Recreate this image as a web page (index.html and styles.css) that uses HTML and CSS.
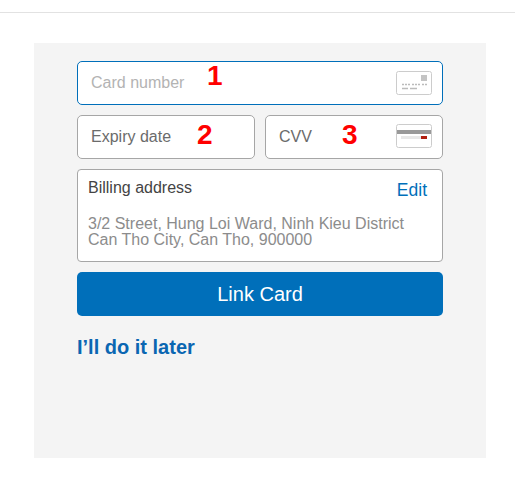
FILE: index.html
```html
<!DOCTYPE html>
<html lang="en">
<head>
    <meta charset="UTF-8">
    <meta name="viewport" content="width=device-width, initial-scale=1.0">
    <title>Link Card</title>
    <link rel="stylesheet" href="styles.css">
</head>
<body>
    <div class="top-line"></div>

    <div class="panel">
        <div class="field field-active">
            <span class="placeholder">Card number</span>
            <span class="mark mark-1">1</span>
            <svg class="card-icon" width="36" height="24" viewBox="0 0 36 24">
                <rect x="0.5" y="0.5" width="35" height="23" rx="2" fill="#fff" stroke="#ccc"/>
                <rect x="25" y="4" width="6" height="6" fill="#c4c4c4"/>
                <path d="M6 13.5h25" stroke="#bbb" stroke-width="1.5" stroke-dasharray="2 1 2 1 2 2"/>
                <path d="M6 17.5h6M14 17.5h7" stroke="#bbb" stroke-width="1.5"/>
            </svg>
        </div>

        <div class="row">
            <div class="field field-half">
                <span class="value">Expiry date</span>
                <span class="mark mark-2">2</span>
            </div>
            <div class="field field-half">
                <span class="value">CVV</span>
                <span class="mark mark-3">3</span>
                <svg class="card-icon card-icon-cvv" width="36" height="24" viewBox="0 0 36 24">
                    <rect x="0.5" y="0.5" width="35" height="23" rx="2" fill="#fff" stroke="#ccc"/>
                    <rect x="1" y="6" width="34" height="4" fill="#999"/>
                    <rect x="5" y="12" width="20" height="3" fill="#e8e8e8"/>
                    <rect x="25" y="12" width="6" height="3" fill="#b01e10"/>
                </svg>
            </div>
        </div>

        <div class="billing">
            <div class="billing-head">
                <span class="billing-title">Billing address</span>
                <a class="edit" href="#">Edit</a>
            </div>
            <div class="address">
                3/2 Street, Hung Loi Ward, Ninh Kieu District<br>
                Can Tho City, Can Tho, 900000
            </div>
        </div>

        <button class="link-card">Link Card</button>

        <a class="later" href="#">I’ll do it later</a>
    </div>
</body>
</html>
```

FILE: styles.css
```css
body {
    margin: 0;
    font-family: "Liberation Sans", Arial, sans-serif;
    background-color: #fff;
    color: #333;
}

.top-line {
    height: 12px;
    border-bottom: 1px solid #e2e2e2;
}

.panel {
    width: 452px;
    height: 415px;
    box-sizing: border-box;
    margin: 30px 0 0 34px;
    padding: 18px 43px 0;
    background-color: #f4f4f4;
}

.field {
    position: relative;
    display: flex;
    align-items: center;
    justify-content: space-between;
    height: 44px;
    box-sizing: border-box;
    padding: 0 10px 0 13px;
    background-color: #fff;
    border: 1px solid #a6a6a6;
    border-radius: 5px;
    font-size: 16px;
}

.field-active {
    border-color: #006fba;
}

.row {
    display: flex;
    gap: 10px;
    margin-top: 10px;
}

.field-half {
    flex: 1;
}

.placeholder {
    color: #b3b3b3;
}

.value {
    color: #6b6b6b;
}

/* red numbers drawn over the fields */
.mark {
    position: absolute;
    color: #f00;
    font-size: 28px;
    font-weight: bold;
    line-height: 30px;
}

.mark-1 {
    left: 129px;
    top: -1px;
}

.mark-2 {
    left: 119px;
    top: 4px;
}

.mark-3 {
    left: 76px;
    top: 4px;
}

.card-icon {
    display: block;
}

.card-icon-cvv {
    margin-top: -2px;
}

.billing {
    height: 93px;
    box-sizing: border-box;
    margin-top: 10px;
    padding: 9px 15px 0 10px;
    background-color: #fff;
    border: 1px solid #a6a6a6;
    border-radius: 4px;
}

.billing-head {
    display: flex;
    justify-content: space-between;
    font-size: 16px;
    line-height: 18px;
}

.billing-title {
    color: #444;
}

.edit {
    margin-top: 2px;
    color: #006fba;
    font-size: 17.5px;
    text-decoration: none;
}

.address {
    margin-top: 17px;
    color: #8c8c8c;
    font-size: 16px;
    line-height: 16px;
}

.link-card {
    display: block;
    width: 100%;
    height: 44px;
    margin-top: 10px;
    background-color: #006fba;
    color: #fff;
    border: none;
    border-radius: 5px;
    font-family: inherit;
    font-size: 20px;
}

.later {
    display: block;
    margin-top: 20px;
    color: #0a66b2;
    font-size: 20px;
    font-weight: bold;
    line-height: 23px;
    text-decoration: none;
}
```
